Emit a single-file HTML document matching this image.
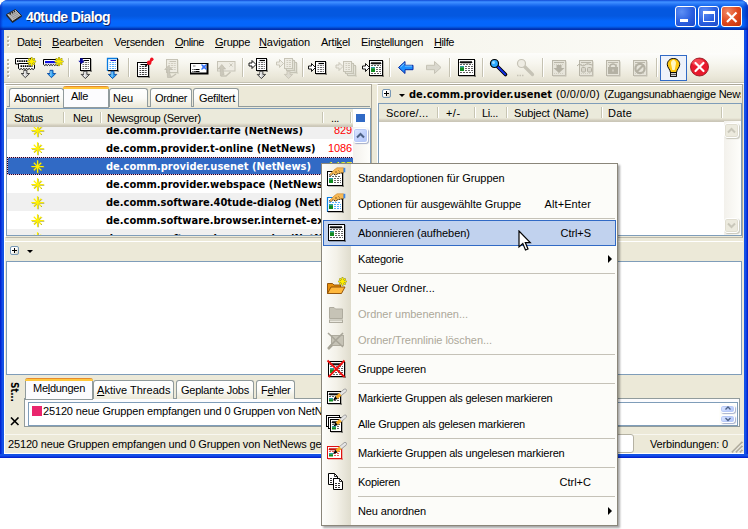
<!DOCTYPE html>
<html lang="de"><head><meta charset="utf-8"><title>40tude Dialog</title>
<style>
*{box-sizing:border-box;margin:0;padding:0}
html,body{width:748px;height:529px;overflow:hidden;background:#fff}
body{position:relative;font-family:"Liberation Sans",sans-serif;font-size:11px;color:#000;line-height:1}
.a{position:absolute}
.t{position:absolute;white-space:nowrap;line-height:13px;height:13px}
.tb{position:absolute;white-space:nowrap;line-height:13px;height:13px;font-family:"DejaVu Sans Condensed","Liberation Sans",sans-serif;font-weight:bold}
u{text-decoration:underline;text-underline-offset:1px}
/* window */
#win{left:0;top:0;width:748px;height:458px;background:linear-gradient(to right,#0019c8 0,#0a3ce0 1.500px,#1a58ea 3px,#0a4ce0 4px,#0a4ce0 744px,#1a58ea 745px,#0a3ce0 746.500px,#0019c8 748px);border-radius:8px 8px 0 0;overflow:hidden}
#title{left:0;top:0;width:748px;height:30px;background:linear-gradient(to right,rgba(0,20,170,.55) 0,rgba(0,20,170,0) 3px,rgba(0,20,170,0) 743px,rgba(0,20,170,.6) 748px),linear-gradient(to bottom,#0a3ccc 0,#2d7af5 1px,#3c8cff 2.500px,#1f70f2 5px,#0a5ce6 7px,#0458e0 9px,#0458e0 16px,#0560ee 19px,#0466fc 21px,#0466fc 26px,#0452d8 27.500px,#0030b0 29px,#0030b0 30px)}
#ttext{left:26px;top:9px;font:bold 14px/16px "Liberation Sans",sans-serif;color:#fff;text-shadow:1px 1px 0 #0a246a;white-space:nowrap;height:16px}
.cb{position:absolute;top:6px;width:21px;height:21px;border:1px solid #fff;border-radius:3px;background:radial-gradient(circle at 30% 25%,#5d8ff5 0%,#2a5fe0 55%,#1c49c8 100%)}
#cbx{background:radial-gradient(circle at 30% 25%,#f08a68 0%,#e04a20 50%,#c23008 100%)}
#client{left:4px;top:30px;width:740px;height:424px;background:#ece9d8;border-left:1px solid #fff;border-bottom:1px solid #fff}
#menubar{left:4px;top:30px;width:740px;height:23px;background:linear-gradient(to right,#eeebdc 0%,#f5f4eb 50%,#fdfdfa 100%)}
#toolbar{left:4px;top:53px;width:740px;height:29px;background:linear-gradient(to bottom,#fdfdfb 0%,#f7f6ef 35%,#ebe8da 80%,#e2dfd0 100%)}
.sep{position:absolute;top:58px;width:1px;height:19px;background:#c5c2b2;box-shadow:1px 0 0 #fff}
.ic{position:absolute;overflow:visible}

.grip{position:absolute;width:3px}
.grip i{display:block;width:2px;height:2px;background:#b9b5a3;box-shadow:1px 1px 0 #fff;margin-bottom:2px}
.frame{position:absolute;border-top:1px solid #aca899;box-shadow:inset 0 1px 0 #fff}
.tab{position:absolute;top:88px;height:19px;border:1px solid #919b9c;border-bottom:none;border-radius:3px 3px 0 0;background:linear-gradient(to bottom,#fff 0%,#fbfbf8 50%,#ece9d8 100%)}
.tabsel{position:absolute;border:1px solid #919b9c;border-top:none;border-radius:3px 3px 0 0;background:#fcfcfe}
.tabsel:before{content:"";position:absolute;left:-1px;right:-1px;top:0;height:3px;border-radius:3px 3px 0 0;background:linear-gradient(to bottom,#e68b2c 0,#e68b2c 1px,#ffc73c 1px,#ffc73c 3px)}
.lb{position:absolute;border:1px solid #7f9db9;background:#fff;overflow:hidden}
.hdr{position:absolute;left:0;top:0;height:17px;background:linear-gradient(to bottom,#ebeadb 0,#ebeadb 13px,#e2dece 14px,#d6d2c2 15px,#cbc7b8 16px)}
.hs{position:absolute;top:3px;width:1px;height:11px;background:#c7c5b2;box-shadow:1px 0 0 #fff}
.row{position:absolute;left:0;height:18px;width:346px}
.sbtn{position:absolute;border:1px solid #fff;border-radius:3px;background:linear-gradient(135deg,#e1eafe 0%,#c3d3fd 50%,#b1c5f8 100%);box-shadow:0 0 0 1px #b7c8f6 inset,1px 1px 1px rgba(80,100,160,.5)}
.sbtnd{position:absolute;border:1px solid #fff;border-radius:3px;background:#eceade;box-shadow:0 0 0 1px #e0ddd0 inset,1px 1px 1px rgba(150,150,130,.5)}
.plus{position:absolute;width:9px;height:9px;border:1px solid #7898b5;border-radius:2px;background:linear-gradient(135deg,#fff 0%,#fff 40%,#d6d2c2 100%)}
.plus:before{content:"";position:absolute;left:1px;top:3px;width:5px;height:1px;background:#000}
.plus:after{content:"";position:absolute;left:3px;top:1px;width:1px;height:5px;background:#000}
.dd{position:absolute;width:0;height:0;border-left:3px solid transparent;border-right:3px solid transparent;border-top:3px solid #000}
.red{color:#f00}
.b{font-family:"DejaVu Sans Condensed","Liberation Sans",sans-serif;font-weight:bold}

.tab2{position:absolute;top:380px;height:19px;border:1px solid #919b9c;border-bottom:none;border-radius:3px 3px 0 0;background:linear-gradient(to bottom,#fff 0%,#fbfbf8 50%,#ece9d8 100%)}

#cm{position:absolute;left:321px;top:163px;width:297px;height:363px;border:1px solid #8a867a;background:#fcfcf9;box-shadow:2px 2px 2px rgba(0,0,0,.35)}
#cm .gut{position:absolute;left:0;top:0;width:29px;height:361px;background:linear-gradient(to right,#fdfdfb 0%,#f3f1e8 50%,#dfdccd 100%)}
#cm .mi{margin-top:1px;position:absolute;left:36px;white-space:nowrap;line-height:13px;height:13px}
#cm .sc{margin-top:1px;position:absolute;right:26px;white-space:nowrap;line-height:13px;height:13px}
#cm .ms{position:absolute;left:36px;right:2px;height:1px;background:#c5c2b8}
#cm .dis{color:#aca899}
#cm .sub{position:absolute;left:286px;width:0;height:0;border-top:4px solid transparent;border-bottom:4px solid transparent;border-left:4px solid #000}
</style></head><body>
<div id="win" class="a">
<div id="title" class="a"></div>
<div id="ttext" class="a"><span style="letter-spacing:-0.600px">40tude Dialog</span></div>
<div class="cb" style="left:675px"><i style="position:absolute;left:4px;top:12px;width:8px;height:3px;background:#fff"></i></div>
<div class="cb" style="left:698px"><i style="position:absolute;left:4px;top:4px;width:12px;height:11px;border:1px solid #fff;border-top-width:3px"></i></div>
<div class="cb" id="cbx" style="left:721px"><svg style="position:absolute;left:0;top:0" width="19" height="19"><path d="M5,5.500 L14.500,15 M14.500,5.500 L5,15" stroke="#fff" stroke-width="2.200"/></svg></div>
<svg class="a" style="left:4px;top:7px" width="22" height="18" viewBox="4 7 22 18"><path d="M6,15.500 L15.500,10 L22,16.500 L12.500,23 Z" fill="#222"/><path d="M6.500,14.500 L15.500,9.500 L21.500,15.500 L12.500,21.500 Z" fill="#b8b8b8" stroke="#1a1a1a" stroke-width="0.900"/><path d="M9.500,14.200 L15,11.200" stroke="#222" stroke-width="1.600" stroke-dasharray="1.600 1"/><path d="M10.500,16 L17,12.500 M11.800,17.300 L18.300,13.800 M13,18.700 L19.500,15.200" stroke="#8a8a8a" stroke-width="0.800"/></svg>
<div class="a" style="left:0;top:454px;width:748px;height:4px;background:linear-gradient(to bottom,#0a4ce0 0,#1a58ea 1px,#0a3ce0 2.500px,#0019c8 4px)"></div>
<div id="client" class="a"></div>
<div id="menubar" class="a"></div>
<div id="toolbar" class="a"></div>
<div class="a" style="left:4px;top:82px;width:740px;height:1px;background:#c5c2b2"></div>
<div class="a" style="left:4px;top:83px;width:740px;height:1px;background:#fff"></div>
<div class="grip" style="left:7px;top:36px"><i></i><i></i><i></i></div>
<div class="grip" style="left:7px;top:59px"><i></i><i></i><i></i><i></i><i></i></div>
<!-- menu -->
<div class="t" style="left:17px;top:36px"><span style="letter-spacing:-0.341px">Date<u>i</u></span></div>
<div class="t" style="left:52px;top:36px"><span style="letter-spacing:-0.222px"><u>B</u>earbeiten</span></div>
<div class="t" style="left:114px;top:36px"><span style="letter-spacing:-0.292px">Ve<u>r</u>senden</span></div>
<div class="t" style="left:175px;top:36px"><span style="letter-spacing:-0.469px"><u>O</u>nline</span></div>
<div class="t" style="left:215px;top:36px"><span style="letter-spacing:-0.284px"><u>G</u>ruppe</span></div>
<div class="t" style="left:259px;top:36px"><span style="letter-spacing:-0.100px"><u>N</u>avigation</span></div>
<div class="t" style="left:321px;top:36px"><span style="letter-spacing:-0.223px">Arti<u>k</u>el</span></div>
<div class="t" style="left:361px;top:36px"><span style="letter-spacing:-0.312px">Ein<u>s</u>tellungen</span></div>
<div class="t" style="left:434px;top:36px"><span style="letter-spacing:-0.403px"><u>H</u>ilfe</span></div>
<!-- toolbar separators -->
<div class="sep" style="left:68px"></div><div class="sep" style="left:128px"></div><div class="sep" style="left:242px"></div><div class="sep" style="left:302px"></div><div class="sep" style="left:389px"></div><div class="sep" style="left:449px"></div><div class="sep" style="left:482px"></div><div class="sep" style="left:542px"></div><div class="sep" style="left:656px"></div>
<svg class="a" style="left:0;top:0" width="748" height="90" viewBox="0 0 748 90"><path d="M15.5,58.5 h16 v5.5 h-16 z" fill="#fff" stroke="#000"/><line x1="17" y1="61.2" x2="28" y2="61.2" stroke="#000" stroke-width="1.7" stroke-dasharray="1.5 0.7"/><path d="M18.5,63.5 h16 v5 l-1.333,1 l-1.333,-1 l-1.333,1 l-1.333,-1 l-1.333,1 l-1.333,-1 l-1.333,1 l-1.333,-1 l-1.333,1 l-1.333,-1 l-1.333,1 l-1.333,-1 z" fill="#fff" stroke="#000"/><line x1="20.5" y1="66.2" x2="32.5" y2="66.2" stroke="#000" stroke-width="1.7" stroke-dasharray="1.5 0.7"/><line x1="28.00" y1="61.60" x2="35.20" y2="61.60" stroke="#8a8a10" stroke-width="2.0" stroke-linecap="round"/><line x1="29.05" y1="59.05" x2="34.15" y2="64.15" stroke="#8a8a10" stroke-width="2.0" stroke-linecap="round"/><line x1="31.60" y1="58.00" x2="31.60" y2="65.20" stroke="#8a8a10" stroke-width="2.0" stroke-linecap="round"/><line x1="34.15" y1="59.05" x2="29.05" y2="64.15" stroke="#8a8a10" stroke-width="2.0" stroke-linecap="round"/><line x1="28.00" y1="61.60" x2="35.20" y2="61.60" stroke="#ffee00" stroke-width="1.2" stroke-linecap="round"/><line x1="29.05" y1="59.05" x2="34.15" y2="64.15" stroke="#ffee00" stroke-width="1.2" stroke-linecap="round"/><line x1="31.60" y1="58.00" x2="31.60" y2="65.20" stroke="#ffee00" stroke-width="1.2" stroke-linecap="round"/><line x1="34.15" y1="59.05" x2="29.05" y2="64.15" stroke="#ffee00" stroke-width="1.2" stroke-linecap="round"/><path d="M23.9,70.3 h3 v3.2 h2.7 l-4.2,4.2 l-4.2,-4.2 h2.7 z" fill="#cfcfcf" stroke="#333" stroke-width="0.9" stroke-linejoin="round"/><path d="M24.799999999999997,71.1 v5" stroke="#fff" stroke-width="1"/><path d="M43.5,59.5 h15 v5 l-1.250,1 l-1.250,-1 l-1.250,1 l-1.250,-1 l-1.250,1 l-1.250,-1 l-1.250,1 l-1.250,-1 l-1.250,1 l-1.250,-1 l-1.250,1 l-1.250,-1 z" fill="#fff" stroke="#000"/><rect x="45" y="61" width="11.5" height="2.2" fill="#1010e0"/><line x1="55.40" y1="61.60" x2="62.60" y2="61.60" stroke="#8a8a10" stroke-width="2.0" stroke-linecap="round"/><line x1="56.45" y1="59.05" x2="61.55" y2="64.15" stroke="#8a8a10" stroke-width="2.0" stroke-linecap="round"/><line x1="59.00" y1="58.00" x2="59.00" y2="65.20" stroke="#8a8a10" stroke-width="2.0" stroke-linecap="round"/><line x1="61.55" y1="59.05" x2="56.45" y2="64.15" stroke="#8a8a10" stroke-width="2.0" stroke-linecap="round"/><line x1="55.40" y1="61.60" x2="62.60" y2="61.60" stroke="#ffee00" stroke-width="1.2" stroke-linecap="round"/><line x1="56.45" y1="59.05" x2="61.55" y2="64.15" stroke="#ffee00" stroke-width="1.2" stroke-linecap="round"/><line x1="59.00" y1="58.00" x2="59.00" y2="65.20" stroke="#ffee00" stroke-width="1.2" stroke-linecap="round"/><line x1="61.55" y1="59.05" x2="56.45" y2="64.15" stroke="#ffee00" stroke-width="1.2" stroke-linecap="round"/><path d="M50.0,70.3 h3 v3.2 h2.7 l-4.2,4.2 l-4.2,-4.2 h2.7 z" fill="#2a9cf0" stroke="#0a4aa0" stroke-width="0.9" stroke-linejoin="round"/><path d="M50.9,71.1 v5" stroke="#9adcff" stroke-width="1"/><g opacity="1"><rect x="80.5" y="58.5" width="10" height="12" fill="#fff" stroke="#000" stroke-width="1"/><path d="M91,59 v13 M81,71 h11" stroke="#000" stroke-width="1" opacity="0.5" fill="none"/><line x1="83.5" y1="60.5" x2="89" y2="60.5" stroke="#000" stroke-width="1.2"/><line x1="82.5" y1="62.50" x2="89" y2="62.50" stroke="#555" stroke-width="1" stroke-dasharray="1.6 0.8 2.4 0.8" opacity="0.85"/><line x1="82.5" y1="64.50" x2="89" y2="64.50" stroke="#555" stroke-width="1" stroke-dasharray="1.6 0.8 2.4 0.8" opacity="0.85"/><line x1="82.5" y1="66.50" x2="89" y2="66.50" stroke="#555" stroke-width="1" stroke-dasharray="1.6 0.8 2.4 0.8" opacity="0.85"/><line x1="82.5" y1="68.50" x2="89" y2="68.50" stroke="#555" stroke-width="1" stroke-dasharray="1.6 0.8 2.4 0.8" opacity="0.85"/></g><path d="M80.2,58.3 h2.6 v2.4 h1.9 l-3.2,3.4 l-3.2,-3.400 h1.9 z" fill="#0a0aa0"/><path d="M83.9,71.2 h3 v3.2 h2.7 l-4.2,4.2 l-4.2,-4.2 h2.7 z" fill="#cfcfcf" stroke="#333" stroke-width="0.9" stroke-linejoin="round"/><path d="M84.80000000000001,72.0 v5" stroke="#fff" stroke-width="1"/><g opacity="1"><rect x="107.5" y="58.5" width="10" height="12" fill="#fff" stroke="#000" stroke-width="1"/><path d="M118,59 v13 M108,71 h11" stroke="#000" stroke-width="1" opacity="0.5" fill="none"/><line x1="110.5" y1="60.5" x2="116" y2="60.5" stroke="#1010c0" stroke-width="1.2"/><line x1="109.5" y1="62.50" x2="116" y2="62.50" stroke="#3aa0ff" stroke-width="1" stroke-dasharray="1.6 0.8 2.4 0.8" opacity="0.85"/><line x1="109.5" y1="64.50" x2="116" y2="64.50" stroke="#3aa0ff" stroke-width="1" stroke-dasharray="1.6 0.8 2.4 0.8" opacity="0.85"/><line x1="109.5" y1="66.50" x2="116" y2="66.50" stroke="#3aa0ff" stroke-width="1" stroke-dasharray="1.6 0.8 2.4 0.8" opacity="0.85"/><line x1="109.5" y1="68.50" x2="116" y2="68.50" stroke="#3aa0ff" stroke-width="1" stroke-dasharray="1.6 0.8 2.4 0.8" opacity="0.85"/></g><path d="M107.5,71 v-12.5 h10" fill="none" stroke="#0a7ce0" stroke-width="1.3"/><path d="M111.1,71.2 h3 v3.2 h2.7 l-4.2,4.2 l-4.2,-4.2 h2.7 z" fill="#2a9cf0" stroke="#0a4aa0" stroke-width="0.9" stroke-linejoin="round"/><path d="M112.0,72.0 v5" stroke="#9adcff" stroke-width="1"/><g opacity="1"><rect x="137.5" y="62.5" width="11" height="14" fill="#fff" stroke="#000" stroke-width="1"/><path d="M149,63 v15 M138,77 h12" stroke="#000" stroke-width="1" opacity="0.5" fill="none"/><line x1="140.5" y1="64.5" x2="147" y2="64.5" stroke="#000" stroke-width="1.2"/><line x1="139.5" y1="66.50" x2="147" y2="66.50" stroke="#222" stroke-width="1" stroke-dasharray="1.6 0.8 2.4 0.8" opacity="0.85"/><line x1="139.5" y1="68.50" x2="147" y2="68.50" stroke="#222" stroke-width="1" stroke-dasharray="1.6 0.8 2.4 0.8" opacity="0.85"/><line x1="139.5" y1="70.50" x2="147" y2="70.50" stroke="#222" stroke-width="1" stroke-dasharray="1.6 0.8 2.4 0.8" opacity="0.85"/><line x1="139.5" y1="72.50" x2="147" y2="72.50" stroke="#222" stroke-width="1" stroke-dasharray="1.6 0.8 2.4 0.8" opacity="0.85"/><line x1="139.5" y1="74.50" x2="147" y2="74.50" stroke="#222" stroke-width="1" stroke-dasharray="1.6 0.8 2.4 0.8" opacity="0.85"/></g><line x1="145" y1="66.5" x2="149" y2="63" stroke="#000" stroke-width="1.2"/><circle cx="149.2" cy="62.8" r="2.3" fill="#f01020"/><circle cx="151.8" cy="59.3" r="1.700" fill="#f01020"/><line x1="149.500" y1="62.500" x2="152" y2="59.500" stroke="#f01020" stroke-width="2"/><g opacity="1"><rect x="166.5" y="59.5" width="11" height="13" fill="#eeece3" stroke="#c6c3b6" stroke-width="1"/><path d="M178,60 v14 M167,73 h12" stroke="#c6c3b6" stroke-width="1" opacity="0.5" fill="none"/><line x1="169.5" y1="61.5" x2="176" y2="61.5" stroke="#c6c3b6" stroke-width="1.2"/><line x1="168.5" y1="63.50" x2="176" y2="63.50" stroke="#cbc8bb" stroke-width="1" stroke-dasharray="1.6 0.8 2.4 0.8" opacity="0.85"/><line x1="168.5" y1="65.50" x2="176" y2="65.50" stroke="#cbc8bb" stroke-width="1" stroke-dasharray="1.6 0.8 2.4 0.8" opacity="0.85"/><line x1="168.5" y1="67.50" x2="176" y2="67.50" stroke="#cbc8bb" stroke-width="1" stroke-dasharray="1.6 0.8 2.4 0.8" opacity="0.85"/><line x1="168.5" y1="69.50" x2="176" y2="69.50" stroke="#cbc8bb" stroke-width="1" stroke-dasharray="1.6 0.8 2.4 0.8" opacity="0.85"/></g><path d="M167.500,77.500 q-0.500,-5 0,-8 h-2.800 l3.800,-3.800 l3.800,3.800 h-2.800 q-0.500,4 2,8 z" fill="#cbc8bb" stroke="#bab7aa" stroke-width="0.600"/><path d="M171,77.500 l5,-3.500" stroke="#c6c3b6" stroke-width="1.500"/><rect x="190" y="63" width="18.500" height="11.500" fill="#000"/><rect x="191" y="64" width="15.500" height="8.500" fill="#fff"/><line x1="193" y1="66" x2="195.5" y2="66" stroke="#777"/><line x1="192.500" y1="69.500" x2="199.500" y2="69.500" stroke="#000" stroke-width="1.100" stroke-dasharray="0.800 0.600 0.800 0.600 4 0"/><line x1="192.500" y1="71.500" x2="199.500" y2="71.500" stroke="#000" stroke-width="1.100" stroke-dasharray="0.800 0.600 0.800 0.600 4 0"/><rect x="202.300" y="65.300" width="3.400" height="3.400" fill="#8a5af0" opacity="0.800"/><path d="M201.500,64.500 l5,5 M206.500,64.500 l-5,5" stroke="#2a7af8" stroke-width="1.300"/><rect x="217.500" y="61.500" width="17.500" height="9.500" fill="#eeece3" stroke="#c6c3b6"/><path d="M229.500,63.500 l3,3 M232.500,63.500 l-3,3" stroke="#cbc8bb"/><path d="M220.500,76 q-0.500,-4 0,-7 h-2.500 l3.800,-4.500 l3.800,4.500 h-2.500 q0,3 1,5.500 z" fill="#cbc8bb" stroke="#bab7aa" stroke-width="0.600"/><path d="M221,76 h5 l4.500,-4" fill="none" stroke="#c6c3b6" stroke-width="1.500"/><g opacity="1"><rect x="256.5" y="58.5" width="10" height="12" fill="#fff" stroke="#000" stroke-width="1"/><path d="M267,59 v13 M257,71 h11" stroke="#000" stroke-width="1" opacity="0.5" fill="none"/><line x1="259.5" y1="60.5" x2="265" y2="60.5" stroke="#000" stroke-width="1.2"/><line x1="258.5" y1="62.50" x2="265" y2="62.50" stroke="#555" stroke-width="1" stroke-dasharray="1.6 0.8 2.4 0.8" opacity="0.85"/><line x1="258.5" y1="64.50" x2="265" y2="64.50" stroke="#555" stroke-width="1" stroke-dasharray="1.6 0.8 2.4 0.8" opacity="0.85"/><line x1="258.5" y1="66.50" x2="265" y2="66.50" stroke="#555" stroke-width="1" stroke-dasharray="1.6 0.8 2.4 0.8" opacity="0.85"/><line x1="258.5" y1="68.50" x2="265" y2="68.50" stroke="#555" stroke-width="1" stroke-dasharray="1.6 0.8 2.4 0.8" opacity="0.85"/></g><path d="M249,63.0 h3 v-2.5 l4,4 l-4,4 v-2.5 h-3 z" fill="#fff" stroke="#000" stroke-width="0.9" stroke-linejoin="round"/><path d="M259.9,71.2 h3 v3.2 h2.7 l-4.2,4.2 l-4.2,-4.2 h2.7 z" fill="#cfcfcf" stroke="#333" stroke-width="0.9" stroke-linejoin="round"/><path d="M260.79999999999995,72.0 v5" stroke="#fff" stroke-width="1"/><g opacity="1"><rect x="288.5" y="62.5" width="8" height="10" fill="#eeece3" stroke="#c6c3b6" stroke-width="1"/><path d="M297,63 v11 M289,73 h9" stroke="#c6c3b6" stroke-width="1" opacity="0.5" fill="none"/><line x1="290.5" y1="64.50" x2="295" y2="64.50" stroke="#cbc8bb" stroke-width="1" stroke-dasharray="1.6 0.8 2.4 0.8" opacity="0.85"/><line x1="290.5" y1="66.50" x2="295" y2="66.50" stroke="#cbc8bb" stroke-width="1" stroke-dasharray="1.6 0.8 2.4 0.8" opacity="0.85"/><line x1="290.5" y1="68.50" x2="295" y2="68.50" stroke="#cbc8bb" stroke-width="1" stroke-dasharray="1.6 0.8 2.4 0.8" opacity="0.85"/><line x1="290.5" y1="70.50" x2="295" y2="70.50" stroke="#cbc8bb" stroke-width="1" stroke-dasharray="1.6 0.8 2.4 0.8" opacity="0.85"/></g><g opacity="1"><rect x="286.5" y="60.5" width="8" height="10" fill="#eeece3" stroke="#c6c3b6" stroke-width="1"/><path d="M295,61 v11 M287,71 h9" stroke="#c6c3b6" stroke-width="1" opacity="0.5" fill="none"/><line x1="288.5" y1="62.50" x2="293" y2="62.50" stroke="#cbc8bb" stroke-width="1" stroke-dasharray="1.6 0.8 2.4 0.8" opacity="0.85"/><line x1="288.5" y1="64.50" x2="293" y2="64.50" stroke="#cbc8bb" stroke-width="1" stroke-dasharray="1.6 0.8 2.4 0.8" opacity="0.85"/><line x1="288.5" y1="66.50" x2="293" y2="66.50" stroke="#cbc8bb" stroke-width="1" stroke-dasharray="1.6 0.8 2.4 0.8" opacity="0.85"/><line x1="288.5" y1="68.50" x2="293" y2="68.50" stroke="#cbc8bb" stroke-width="1" stroke-dasharray="1.6 0.8 2.4 0.8" opacity="0.85"/></g><g opacity="1"><rect x="284.5" y="58.5" width="8" height="10" fill="#eeece3" stroke="#c6c3b6" stroke-width="1"/><path d="M293,59 v11 M285,69 h9" stroke="#c6c3b6" stroke-width="1" opacity="0.5" fill="none"/><line x1="286.5" y1="60.50" x2="291" y2="60.50" stroke="#cbc8bb" stroke-width="1" stroke-dasharray="1.6 0.8 2.4 0.8" opacity="0.85"/><line x1="286.5" y1="62.50" x2="291" y2="62.50" stroke="#cbc8bb" stroke-width="1" stroke-dasharray="1.6 0.8 2.4 0.8" opacity="0.85"/><line x1="286.5" y1="64.50" x2="291" y2="64.50" stroke="#cbc8bb" stroke-width="1" stroke-dasharray="1.6 0.8 2.4 0.8" opacity="0.85"/><line x1="286.5" y1="66.50" x2="291" y2="66.50" stroke="#cbc8bb" stroke-width="1" stroke-dasharray="1.6 0.8 2.4 0.8" opacity="0.85"/></g><path d="M276.5,62.0 h3 v-2.5 l4,4 l-4,4 v-2.5 h-3 z" fill="#eeece3" stroke="#c6c3b6" stroke-width="0.9" stroke-linejoin="round"/><path d="M287.0,71.2 h3 v3.2 h2.7 l-4.2,4.2 l-4.2,-4.2 h2.7 z" fill="#dcd9ce" stroke="#c6c3b6" stroke-width="0.9" stroke-linejoin="round"/><g opacity="1"><rect x="315.5" y="61.5" width="10" height="12" fill="#fff" stroke="#000" stroke-width="1"/><path d="M326,62 v13 M316,74 h11" stroke="#000" stroke-width="1" opacity="0.5" fill="none"/><line x1="318.5" y1="63.5" x2="324" y2="63.5" stroke="#000" stroke-width="1.2"/><line x1="317.5" y1="65.50" x2="324" y2="65.50" stroke="#555" stroke-width="1" stroke-dasharray="1.6 0.8 2.4 0.8" opacity="0.85"/><line x1="317.5" y1="67.50" x2="324" y2="67.50" stroke="#555" stroke-width="1" stroke-dasharray="1.6 0.8 2.4 0.8" opacity="0.85"/><line x1="317.5" y1="69.50" x2="324" y2="69.50" stroke="#555" stroke-width="1" stroke-dasharray="1.6 0.8 2.4 0.8" opacity="0.85"/><line x1="317.5" y1="71.50" x2="324" y2="71.50" stroke="#555" stroke-width="1" stroke-dasharray="1.6 0.8 2.4 0.8" opacity="0.85"/></g><path d="M308.5,66.0 h3 v-2.5 l4,4 l-4,4 v-2.5 h-3 z" fill="#fff" stroke="#000" stroke-width="0.9" stroke-linejoin="round"/><g opacity="1"><rect x="347.5" y="65.5" width="8" height="10" fill="#eeece3" stroke="#c6c3b6" stroke-width="1"/><path d="M356,66 v11 M348,76 h9" stroke="#c6c3b6" stroke-width="1" opacity="0.5" fill="none"/><line x1="349.5" y1="67.50" x2="354" y2="67.50" stroke="#cbc8bb" stroke-width="1" stroke-dasharray="1.6 0.8 2.4 0.8" opacity="0.85"/><line x1="349.5" y1="69.50" x2="354" y2="69.50" stroke="#cbc8bb" stroke-width="1" stroke-dasharray="1.6 0.8 2.4 0.8" opacity="0.85"/><line x1="349.5" y1="71.50" x2="354" y2="71.50" stroke="#cbc8bb" stroke-width="1" stroke-dasharray="1.6 0.8 2.4 0.8" opacity="0.85"/><line x1="349.5" y1="73.50" x2="354" y2="73.50" stroke="#cbc8bb" stroke-width="1" stroke-dasharray="1.6 0.8 2.4 0.8" opacity="0.85"/></g><g opacity="1"><rect x="345.5" y="63.5" width="8" height="10" fill="#eeece3" stroke="#c6c3b6" stroke-width="1"/><path d="M354,64 v11 M346,74 h9" stroke="#c6c3b6" stroke-width="1" opacity="0.5" fill="none"/><line x1="347.5" y1="65.50" x2="352" y2="65.50" stroke="#cbc8bb" stroke-width="1" stroke-dasharray="1.6 0.8 2.4 0.8" opacity="0.85"/><line x1="347.5" y1="67.50" x2="352" y2="67.50" stroke="#cbc8bb" stroke-width="1" stroke-dasharray="1.6 0.8 2.4 0.8" opacity="0.85"/><line x1="347.5" y1="69.50" x2="352" y2="69.50" stroke="#cbc8bb" stroke-width="1" stroke-dasharray="1.6 0.8 2.4 0.8" opacity="0.85"/><line x1="347.5" y1="71.50" x2="352" y2="71.50" stroke="#cbc8bb" stroke-width="1" stroke-dasharray="1.6 0.8 2.4 0.8" opacity="0.85"/></g><g opacity="1"><rect x="343.5" y="61.5" width="8" height="10" fill="#eeece3" stroke="#c6c3b6" stroke-width="1"/><path d="M352,62 v11 M344,72 h9" stroke="#c6c3b6" stroke-width="1" opacity="0.5" fill="none"/><line x1="345.5" y1="63.50" x2="350" y2="63.50" stroke="#cbc8bb" stroke-width="1" stroke-dasharray="1.6 0.8 2.4 0.8" opacity="0.85"/><line x1="345.5" y1="65.50" x2="350" y2="65.50" stroke="#cbc8bb" stroke-width="1" stroke-dasharray="1.6 0.8 2.4 0.8" opacity="0.85"/><line x1="345.5" y1="67.50" x2="350" y2="67.50" stroke="#cbc8bb" stroke-width="1" stroke-dasharray="1.6 0.8 2.4 0.8" opacity="0.85"/><line x1="345.5" y1="69.50" x2="350" y2="69.50" stroke="#cbc8bb" stroke-width="1" stroke-dasharray="1.6 0.8 2.4 0.8" opacity="0.85"/></g><path d="M336,65.0 h3 v-2.5 l4,4 l-4,4 v-2.5 h-3 z" fill="#eeece3" stroke="#c6c3b6" stroke-width="0.9" stroke-linejoin="round"/><g opacity="1"><rect x="369.5" y="60.5" width="13" height="15" fill="#fff" stroke="#000"/><path d="M383,61 v16 M370,76 h14" stroke="#000" stroke-width="1" opacity="0.5" fill="none"/><path d="M371,64 l1,-1.5 l1,1.5 l1,-1.5 l1,1.5 l1,-1.5 l1,1.5 l1,-1.5 l1,1.5 l1,-1.5 l1,1.5" fill="none" stroke="#000" stroke-width="1.3" stroke-linejoin="round"/><line x1="371" y1="65.5" x2="381" y2="65.5" stroke="#4a4a4a" stroke-width="1" stroke-dasharray="2 1" opacity="0.85"/><line x1="376" y1="67.5" x2="381" y2="67.5" stroke="#4a4a4a" stroke-width="1" stroke-dasharray="2 1" opacity="0.85"/><line x1="376" y1="69.5" x2="381" y2="69.5" stroke="#4a4a4a" stroke-width="1" stroke-dasharray="2 1" opacity="0.85"/><line x1="376" y1="71.5" x2="381" y2="71.5" stroke="#4a4a4a" stroke-width="1" stroke-dasharray="2 1" opacity="0.85"/><line x1="371" y1="73.5" x2="381" y2="73.5" stroke="#4a4a4a" stroke-width="1" stroke-dasharray="2 1" opacity="0.85"/><rect x="371" y="67" width="4" height="1.5" fill="#2a9aa8"/><rect x="371" y="68.3" width="4" height="3.7" fill="#0f8a1f"/></g><path d="M362.5,66.0 h3 v-2.5 l4,4 l-4,4 v-2.5 h-3 z" fill="#fff" stroke="#000" stroke-width="0.9" stroke-linejoin="round"/><path d="M398.500,67.500 l6.500,-6 v3.800 h8 v4.400 h-8 v3.800 z" fill="#1e90ff" stroke="#0a2aa0" stroke-width="1" stroke-linejoin="round"/><path d="M400.500,67.200 l4,-3.700 M405,66 h7" stroke="#8ad0ff" stroke-width="0.900" fill="none"/><path d="M441,67.500 l-6.500,-6 v3.800 h-8 v4.400 h8 v3.800 z" fill="#dad8ce" stroke="#c6c3b6" stroke-width="1" stroke-linejoin="round"/><g opacity="1"><rect x="458.5" y="59.5" width="16" height="16" fill="#fff" stroke="#000"/><path d="M475,60 v17 M459,76 h17" stroke="#000" stroke-width="1" opacity="0.5" fill="none"/><path d="M460,63 l1,-1.5 l1,1.5 l1,-1.5 l1,1.5 l1,-1.5 l1,1.5 l1,-1.5 l1,1.5 l1,-1.5 l1,1.5 l1,-1.5 l1,1.5" fill="none" stroke="#000" stroke-width="1.3" stroke-linejoin="round"/><line x1="460" y1="64.5" x2="473" y2="64.5" stroke="#4a4a4a" stroke-width="1" stroke-dasharray="2 1" opacity="0.85"/><line x1="465" y1="66.5" x2="473" y2="66.5" stroke="#4a4a4a" stroke-width="1" stroke-dasharray="2 1" opacity="0.85"/><line x1="465" y1="68.5" x2="473" y2="68.5" stroke="#4a4a4a" stroke-width="1" stroke-dasharray="2 1" opacity="0.85"/><line x1="465" y1="70.5" x2="473" y2="70.5" stroke="#4a4a4a" stroke-width="1" stroke-dasharray="2 1" opacity="0.85"/><line x1="460" y1="72.5" x2="473" y2="72.5" stroke="#4a4a4a" stroke-width="1" stroke-dasharray="2 1" opacity="0.85"/><rect x="460" y="66" width="4" height="1.5" fill="#2a9aa8"/><rect x="460" y="67.3" width="4" height="3.7" fill="#0f8a1f"/></g><line x1="497" y1="66" x2="505.500" y2="74.500" stroke="#000" stroke-width="3.600" stroke-linecap="round"/><line x1="497" y1="66" x2="505.300" y2="74.300" stroke="#1030f0" stroke-width="1.800" stroke-linecap="round"/><circle cx="494.500" cy="63.500" r="4" fill="#28a8ff" stroke="#000" stroke-width="1.200"/><circle cx="493.500" cy="62.500" r="1.500" fill="#9adcff"/><line x1="524" y1="66" x2="532.500" y2="74.500" stroke="#c6c3b6" stroke-width="3.200" stroke-linecap="round"/><circle cx="521.500" cy="63.500" r="4" fill="#eeece3" stroke="#c6c3b6" stroke-width="1.200"/><line x1="517" y1="75.500" x2="524" y2="75.500" stroke="#c6c3b6" stroke-width="1.400" stroke-dasharray="1.500 1"/><rect x="552.5" y="60.500" width="13" height="15" fill="#e6e4da" stroke="#b9b6a9"/><path d="M566,61.500 v15 M553,76 h13" stroke="#c6c3b6" fill="none"/><line x1="554" y1="62.500" x2="564" y2="62.500" stroke="#bab7aa"/><line x1="554" y1="64.500" x2="564" y2="64.500" stroke="#d0cdc0" stroke-dasharray="1 1"/><line x1="554" y1="73.500" x2="564" y2="73.500" stroke="#d0cdc0" stroke-dasharray="1 1"/><rect x="579.5" y="60.500" width="13" height="15" fill="#e6e4da" stroke="#b9b6a9"/><path d="M593,61.500 v15 M580,76 h13" stroke="#c6c3b6" fill="none"/><line x1="581" y1="62.500" x2="591" y2="62.500" stroke="#bab7aa"/><line x1="581" y1="64.500" x2="591" y2="64.500" stroke="#d0cdc0" stroke-dasharray="1 1"/><line x1="581" y1="73.500" x2="591" y2="73.500" stroke="#d0cdc0" stroke-dasharray="1 1"/><rect x="606.5" y="60.500" width="13" height="15" fill="#e6e4da" stroke="#b9b6a9"/><path d="M620,61.500 v15 M607,76 h13" stroke="#c6c3b6" fill="none"/><line x1="608" y1="62.500" x2="618" y2="62.500" stroke="#bab7aa"/><line x1="608" y1="64.500" x2="618" y2="64.500" stroke="#d0cdc0" stroke-dasharray="1 1"/><line x1="608" y1="73.500" x2="618" y2="73.500" stroke="#d0cdc0" stroke-dasharray="1 1"/><rect x="633.5" y="60.500" width="13" height="15" fill="#e6e4da" stroke="#b9b6a9"/><path d="M647,61.500 v15 M634,76 h13" stroke="#c6c3b6" fill="none"/><line x1="635" y1="62.500" x2="645" y2="62.500" stroke="#bab7aa"/><line x1="635" y1="64.500" x2="645" y2="64.500" stroke="#d0cdc0" stroke-dasharray="1 1"/><line x1="635" y1="73.500" x2="645" y2="73.500" stroke="#d0cdc0" stroke-dasharray="1 1"/><path d="M556.500,65 h5 v3 h3 l-5.500,5 l-5.500,-5 h3 z" fill="#b4b1a4"/><path d="M577,66 q2,-3 4,-1 t4,0 t4,-1 t4,1" fill="none" stroke="#b4b1a4"/><rect x="581.500" y="67.500" width="4" height="4.500" rx="1" fill="#d8d5ca" stroke="#b4b1a4"/><rect x="587.500" y="67.500" width="4" height="4.500" rx="1" fill="#d8d5ca" stroke="#b4b1a4"/><rect x="608" y="67" width="10" height="7" fill="#b4b1a4"/><path d="M610,67 v-1.500 q3,-3 6,0 v1.500" fill="none" stroke="#b4b1a4" stroke-width="1.600"/><rect x="612.500" y="69.500" width="1" height="2" fill="#e6e4da"/><circle cx="640" cy="68.500" r="4.600" fill="none" stroke="#b4b1a4" stroke-width="2.200"/><line x1="636.500" y1="72" x2="643.500" y2="65" stroke="#b4b1a4" stroke-width="2.200"/><rect x="660.500" y="55.500" width="26" height="25" fill="#eef2fa" stroke="#316ac5"/><path d="M673.500,58.500 c-4,0 -6.200,3 -6.200,6 c0,3.200 2.800,4.600 3.200,8 h6 c0.400,-3.400 3.200,-4.800 3.200,-8 c0,-3 -2.200,-6 -6.200,-6 z" fill="#ffc810" stroke="#000" stroke-width="1"/><path d="M673.500,60 c-2,0 -3,2.500 -2.200,5 l1,5 h2.400 l1,-5 c0.800,-2.500 -0.200,-5 -2.200,-5z" fill="#fff7c0"/><rect x="670.500" y="72.500" width="6" height="4" fill="#d0d0d0" stroke="#000" stroke-width="0.900"/><line x1="671" y1="74.500" x2="676" y2="74.500" stroke="#555"/><circle cx="699.500" cy="67" r="9" fill="#e8192c" stroke="#8a0a14" stroke-width="0.800"/><ellipse cx="698" cy="62.500" rx="6" ry="3.500" fill="#ff6a70" opacity="0.550"/><path d="M695.500,63 l8,8 M703.500,63 l-8,8" stroke="#fff" stroke-width="2.200" stroke-linecap="round"/></svg>
<!-- left panel -->
<div class="frame" style="left:5px;top:84px;width:367px;height:154px;border-bottom:1px solid #bcb9aa;border-right:1px solid #aca899;border-left:1px solid #fff"></div>
<div class="a" style="left:7px;top:106px;width:363px;height:1px;background:#919b9c"></div>
<div class="tab" style="left:9px;width:55px"></div>
<div class="tab" style="left:109px;width:39px"></div>
<div class="tab" style="left:150px;width:42px"></div>
<div class="tab" style="left:193px;width:46px"></div>
<div class="tabsel" style="left:63px;top:86px;width:46px;height:22px"></div>
<div class="t" style="left:14px;top:92px"><span style="letter-spacing:-0.233px">Abonniert</span></div>
<div class="t" style="left:71px;top:90px"><span style="letter-spacing:-0.336px">Alle</span></div>
<div class="t" style="left:113px;top:92px"><span style="letter-spacing:-0.062px">Neu</span></div>
<div class="t" style="left:155px;top:92px"><span style="letter-spacing:-0.375px">Ordner</span></div>
<div class="t" style="left:199px;top:92px"><span style="letter-spacing:-0.280px">Gefiltert</span></div>
<div class="lb" style="left:6px;top:108px;width:365px;height:128px">
 <div class="hdr" style="width:363px;height:18px;background:linear-gradient(to bottom,#ebeadb 0,#ebeadb 14px,#e2dece 15px,#d6d2c2 16px,#cbc7b8 17px)"></div>
 <div class="a" style="left:346px;top:0;width:17px;height:18px;background:#fff"></div>
 <div class="a" style="left:349px;top:5px;width:9px;height:8px;background:#316ac5"></div>
 <div class="hs" style="left:56px"></div><div class="hs" style="left:93px"></div><div class="hs" style="left:315px"></div><div class="hs" style="left:343px"></div>
 <div class="t" style="left:7px;top:3px"><span style="letter-spacing:-0.365px">Status</span></div>
 <div class="t" style="left:66px;top:3px"><span style="letter-spacing:-0.229px">Neu</span></div>
 <div class="t" style="left:100px;top:3px"><span style="letter-spacing:-0.246px">Newsgroup (Server)</span></div>
 <div class="t" style="left:324px;top:3px"><span style="letter-spacing:-0.391px">...</span></div>
 <div class="a" style="left:0;top:18px;width:363px;height:108px;overflow:hidden"><div class="a" style="left:0;top:-1px;width:363px;height:109px">
  <div class="row" style="top:-5px;background:#f0f0f0"></div>
  <div class="row" style="top:13px;background:#fff"></div>
  <div class="row" style="top:31px;background:#316ac5"><i class="a" style="left:0;top:0;width:346px;height:1px;background:repeating-linear-gradient(to right,#14082a 0,#14082a 1px,#f4b4cc 1px,#f4b4cc 2px)"></i><i class="a" style="left:0;top:17px;width:346px;height:1px;background:repeating-linear-gradient(to right,#14082a 0,#14082a 1px,#f4b4cc 1px,#f4b4cc 2px)"></i><i class="a" style="left:0;top:0;width:1px;height:18px;background:repeating-linear-gradient(to bottom,#14082a 0,#14082a 1px,#f4b4cc 1px,#f4b4cc 2px)"></i></div>
  <div class="row" style="top:49px;background:#fff"></div>
  <div class="row" style="top:67px;background:#f0f0f0"></div>
  <div class="row" style="top:85px;background:#fff"></div>
  <div class="row" style="top:103px;background:#f0f0f0"></div>
<svg class="a" style="left:0;top:0" width="60" height="109" viewBox="0 0 60 109"><line x1="24.90" y1="5.10" x2="37.30" y2="5.10" stroke="#9a9a20" stroke-width="1.0"/><line x1="27.37" y1="1.37" x2="34.83" y2="8.83" stroke="#9a9a20" stroke-width="1.0"/><line x1="31.10" y1="-1.10" x2="31.10" y2="11.30" stroke="#9a9a20" stroke-width="1.0"/><line x1="34.83" y1="1.37" x2="27.37" y2="8.83" stroke="#9a9a20" stroke-width="1.0"/><line x1="24.30" y1="4.50" x2="36.70" y2="4.50" stroke="#fff000" stroke-width="1.15"/><line x1="26.77" y1="0.77" x2="34.23" y2="8.23" stroke="#fff000" stroke-width="1.15"/><line x1="30.50" y1="-1.70" x2="30.50" y2="10.70" stroke="#fff000" stroke-width="1.15"/><line x1="34.23" y1="0.77" x2="26.77" y2="8.23" stroke="#fff000" stroke-width="1.15"/><line x1="24.90" y1="23.10" x2="37.30" y2="23.10" stroke="#9a9a20" stroke-width="1.0"/><line x1="27.37" y1="19.37" x2="34.83" y2="26.83" stroke="#9a9a20" stroke-width="1.0"/><line x1="31.10" y1="16.90" x2="31.10" y2="29.30" stroke="#9a9a20" stroke-width="1.0"/><line x1="34.83" y1="19.37" x2="27.37" y2="26.83" stroke="#9a9a20" stroke-width="1.0"/><line x1="24.30" y1="22.50" x2="36.70" y2="22.50" stroke="#fff000" stroke-width="1.15"/><line x1="26.77" y1="18.77" x2="34.23" y2="26.23" stroke="#fff000" stroke-width="1.15"/><line x1="30.50" y1="16.30" x2="30.50" y2="28.70" stroke="#fff000" stroke-width="1.15"/><line x1="34.23" y1="18.77" x2="26.77" y2="26.23" stroke="#fff000" stroke-width="1.15"/><line x1="24.90" y1="41.10" x2="37.30" y2="41.10" stroke="#9a9a20" stroke-width="1.0"/><line x1="27.37" y1="37.37" x2="34.83" y2="44.83" stroke="#9a9a20" stroke-width="1.0"/><line x1="31.10" y1="34.90" x2="31.10" y2="47.30" stroke="#9a9a20" stroke-width="1.0"/><line x1="34.83" y1="37.37" x2="27.37" y2="44.83" stroke="#9a9a20" stroke-width="1.0"/><line x1="24.30" y1="40.50" x2="36.70" y2="40.50" stroke="#fff000" stroke-width="1.15"/><line x1="26.77" y1="36.77" x2="34.23" y2="44.23" stroke="#fff000" stroke-width="1.15"/><line x1="30.50" y1="34.30" x2="30.50" y2="46.70" stroke="#fff000" stroke-width="1.15"/><line x1="34.23" y1="36.77" x2="26.77" y2="44.23" stroke="#fff000" stroke-width="1.15"/><line x1="24.90" y1="59.10" x2="37.30" y2="59.10" stroke="#9a9a20" stroke-width="1.0"/><line x1="27.37" y1="55.37" x2="34.83" y2="62.83" stroke="#9a9a20" stroke-width="1.0"/><line x1="31.10" y1="52.90" x2="31.10" y2="65.30" stroke="#9a9a20" stroke-width="1.0"/><line x1="34.83" y1="55.37" x2="27.37" y2="62.83" stroke="#9a9a20" stroke-width="1.0"/><line x1="24.30" y1="58.50" x2="36.70" y2="58.50" stroke="#fff000" stroke-width="1.15"/><line x1="26.77" y1="54.77" x2="34.23" y2="62.23" stroke="#fff000" stroke-width="1.15"/><line x1="30.50" y1="52.30" x2="30.50" y2="64.70" stroke="#fff000" stroke-width="1.15"/><line x1="34.23" y1="54.77" x2="26.77" y2="62.23" stroke="#fff000" stroke-width="1.15"/><line x1="24.90" y1="77.10" x2="37.30" y2="77.10" stroke="#9a9a20" stroke-width="1.0"/><line x1="27.37" y1="73.37" x2="34.83" y2="80.83" stroke="#9a9a20" stroke-width="1.0"/><line x1="31.10" y1="70.90" x2="31.10" y2="83.30" stroke="#9a9a20" stroke-width="1.0"/><line x1="34.83" y1="73.37" x2="27.37" y2="80.83" stroke="#9a9a20" stroke-width="1.0"/><line x1="24.30" y1="76.50" x2="36.70" y2="76.50" stroke="#fff000" stroke-width="1.15"/><line x1="26.77" y1="72.77" x2="34.23" y2="80.23" stroke="#fff000" stroke-width="1.15"/><line x1="30.50" y1="70.30" x2="30.50" y2="82.70" stroke="#fff000" stroke-width="1.15"/><line x1="34.23" y1="72.77" x2="26.77" y2="80.23" stroke="#fff000" stroke-width="1.15"/><line x1="24.90" y1="95.10" x2="37.30" y2="95.10" stroke="#9a9a20" stroke-width="1.0"/><line x1="27.37" y1="91.37" x2="34.83" y2="98.83" stroke="#9a9a20" stroke-width="1.0"/><line x1="31.10" y1="88.90" x2="31.10" y2="101.30" stroke="#9a9a20" stroke-width="1.0"/><line x1="34.83" y1="91.37" x2="27.37" y2="98.83" stroke="#9a9a20" stroke-width="1.0"/><line x1="24.30" y1="94.50" x2="36.70" y2="94.50" stroke="#fff000" stroke-width="1.15"/><line x1="26.77" y1="90.77" x2="34.23" y2="98.23" stroke="#fff000" stroke-width="1.15"/><line x1="30.50" y1="88.30" x2="30.50" y2="100.70" stroke="#fff000" stroke-width="1.15"/><line x1="34.23" y1="90.77" x2="26.77" y2="98.23" stroke="#fff000" stroke-width="1.15"/><line x1="24.90" y1="113.10" x2="37.30" y2="113.10" stroke="#9a9a20" stroke-width="1.0"/><line x1="27.37" y1="109.37" x2="34.83" y2="116.83" stroke="#9a9a20" stroke-width="1.0"/><line x1="31.10" y1="106.90" x2="31.10" y2="119.30" stroke="#9a9a20" stroke-width="1.0"/><line x1="34.83" y1="109.37" x2="27.37" y2="116.83" stroke="#9a9a20" stroke-width="1.0"/><line x1="24.30" y1="112.50" x2="36.70" y2="112.50" stroke="#fff000" stroke-width="1.15"/><line x1="26.77" y1="108.77" x2="34.23" y2="116.23" stroke="#fff000" stroke-width="1.15"/><line x1="30.50" y1="106.30" x2="30.50" y2="118.70" stroke="#fff000" stroke-width="1.15"/><line x1="34.23" y1="108.77" x2="26.77" y2="116.23" stroke="#fff000" stroke-width="1.15"/></svg>
  <div class="a" style="left:0;top:0;width:315px;height:109px;overflow:hidden">
  <div class="tb" style="left:99px;top:-2px"><span>de.comm.provider.tarife (NetNews)</span></div>
  <div class="tb" style="left:99px;top:16px"><span>de.comm.provider.t-online (NetNews)</span></div>
  <div class="tb" style="left:99px;top:34px;color:#fff"><span style="letter-spacing:0.016px">de.comm.provider.usenet (NetNews)</span></div>
  <div class="tb" style="left:99px;top:52px"><span>de.comm.provider.webspace (NetNews)</span></div>
  <div class="tb" style="left:99px;top:70px"><span>de.comm.software.40tude-dialog (NetNews)</span></div>
  <div class="tb" style="left:99px;top:88px"><span>de.comm.software.browser.internet-explorer (NetNews)</span></div>
  <div class="tb" style="left:99px;top:106px"><span>de.comm.software.browser.misc (NetNews)</span></div>
  </div>
  <div class="t red" style="right:18px;top:-2px"><span style="letter-spacing:-0.120px">829</span></div>
  <div class="t red" style="right:18px;top:16px"><span style="letter-spacing:-0.121px">1086</span></div>
  <div class="t" style="right:18px;top:34px;color:#ff0"><span style="letter-spacing:-0.121px">1437</span></div>
  <div class="a" style="left:346px;top:0;width:17px;height:109px;background:linear-gradient(to right,#f3f1ec,#fefefb)"></div>
  <div class="sbtn" style="left:346px;top:2px;width:15px;height:15px"></div>
  <svg class="a" style="left:349px;top:6px" width="9" height="7"><path d="M1,5.500 L4.500,2 L8,5.500" fill="none" stroke="#4d6185" stroke-width="2"/></svg>
 </div></div>
</div>
<!-- right panel -->
<div class="frame" style="left:377px;top:84px;width:366px;height:154px;border-bottom:1px solid #bcb9aa;border-left:1px solid #fff;border-right:1px solid #aca899"></div>
<div class="plus" style="left:382px;top:89px"></div>
<div class="dd" style="left:399px;top:94px"></div>
<div class="a" style="left:409px;top:88px;width:332px;height:14px;overflow:hidden;white-space:nowrap;line-height:13px"><span class="a" style="left:0;top:0"><span class="b" style="letter-spacing:0.033px">de.comm.provider.usenet</span></span><span class="a" style="left:147px;top:0"><span style="letter-spacing:0.337px">(0/0/0/0)</span></span><span class="a" style="left:195px;top:0"><span style="letter-spacing:-0.220px">(Zugangsunabhaengige News)</span></span></div>
<div class="lb" style="left:378px;top:103px;width:364px;height:133px">
 <div class="hdr" style="width:362px;height:18px;background:linear-gradient(to bottom,#ebeadb 0,#ebeadb 14px,#e2dece 15px,#d6d2c2 16px,#cbc7b8 17px)"></div>
 <div class="hs" style="left:58px"></div><div class="hs" style="left:95px"></div><div class="hs" style="left:127px"></div><div class="hs" style="left:222px"></div><div class="hs" style="left:342px"></div>
 <div class="t" style="left:7px;top:3px"><span style="letter-spacing:0.170px">Score/...</span></div>
 <div class="t" style="left:67px;top:3px"><span style="letter-spacing:0.448px">+/-</span></div>
 <div class="t" style="left:103px;top:3px"><span style="letter-spacing:-0.347px">Li...</span></div>
 <div class="t" style="left:135px;top:3px"><span style="letter-spacing:-0.137px">Subject (Name)</span></div>
 <div class="t" style="left:229px;top:3px"><span style="letter-spacing:0.188px">Date</span></div>
 <div class="a" style="left:345px;top:17px;width:17px;height:114px;background:linear-gradient(to right,#f3f1ec,#fefefb)"></div>
 <div class="sbtnd" style="left:345px;top:19px;width:15px;height:15px"></div>
 <div class="sbtnd" style="left:345px;top:114px;width:15px;height:15px"></div>
 <svg class="a" style="left:348px;top:23px" width="9" height="7"><path d="M1,5.500 L4.500,2 L8,5.500" fill="none" stroke="#c9c7ba" stroke-width="2"/></svg>
 <svg class="a" style="left:348px;top:118px" width="9" height="7"><path d="M1,1.500 L4.500,5 L8,1.500" fill="none" stroke="#c9c7ba" stroke-width="2"/></svg>
</div>
<!-- lower pane -->
<div class="a" style="left:5px;top:241px;width:738px;height:1px;background:#fff"></div>
<div class="plus" style="left:10px;top:246px"></div>
<div class="dd" style="left:27px;top:250px"></div>
<div class="lb" style="left:6px;top:261px;width:736px;height:114px"></div>


<!-- bottom dock -->
<div class="a" style="left:24px;top:398px;width:716px;height:29px;border:1px solid #919b9c;background:#fcfcfe"></div>
<div class="tab2" style="left:93px;width:81px"></div>
<div class="tab2" style="left:176px;width:78px"></div>
<div class="tab2" style="left:256px;width:39px"></div>
<div class="tabsel" style="left:25px;top:378px;width:68px;height:22px"></div>
<div class="t" style="left:33px;top:382px"><span style="letter-spacing:-0.273px">Me<u>l</u>dungen</span></div>
<div class="t" style="left:97px;top:384px"><span style="letter-spacing:0.023px"><u>A</u>ktive Threads</span></div>
<div class="t" style="left:181px;top:384px"><span style="letter-spacing:-0.226px">Geplante Jobs</span></div>
<div class="t" style="left:261px;top:384px"><span style="letter-spacing:-0.284px">F<u>e</u>hler</span></div>
<div class="lb" style="left:28px;top:402px;width:710px;height:24px">
 <div class="a" style="left:3px;top:3px;width:10px;height:10px;background:#e9256d"></div>
 <div class="t" style="left:14px;top:2px"><span style="letter-spacing:-0.156px">25120 neue Gruppen empfangen und 0 Gruppen von NetNews geloescht (29.03.2005 18:11)</span></div>
 <div class="a" style="left:690px;top:1px;width:17px;height:20px;background:#fefefb"></div>
 <div class="sbtn" style="left:691px;top:2px;width:15px;height:8px"></div>
 <div class="sbtn" style="left:691px;top:12px;width:15px;height:8px"></div>
 <svg class="a" style="left:696px;top:3px" width="6" height="5"><path d="M0.500,3.500 L3,1 L5.500,3.500" fill="none" stroke="#4d6185" stroke-width="1.300"/></svg>
 <svg class="a" style="left:696px;top:14px" width="6" height="5"><path d="M0.500,1 L3,3.500 L5.500,1" fill="none" stroke="#4d6185" stroke-width="1.300"/></svg>
</div>
<div class="a b" style="left:7px;top:380px;width:14px;height:26px"><div style="position:absolute;left:13px;top:2px;transform-origin:0 0;transform:rotate(90deg);white-space:nowrap;font-size:10px;line-height:12px;letter-spacing:-0.3px">St...</div></div>
<svg class="a" style="left:10px;top:417px" width="10" height="9"><path d="M1,0.500 L8.500,8 M8.500,0.500 L1,8" stroke="#000" stroke-width="1.600"/></svg>
<!-- status bar -->
<div class="a" style="left:4px;top:434px;width:740px;height:1px;background:#f8f7f0"></div>
<div class="t" style="left:8px;top:438px"><span style="letter-spacing:-0.156px">25120 neue Gruppen empfangen und 0 Gruppen von NetNews geloescht (29.03.2005)</span></div>
<div class="a" style="left:500px;top:434px;width:134px;height:19px;border:1px solid #b5b2a3;border-radius:3px;background:#fff"></div>
<div class="t" style="left:650px;top:438px"><span style="letter-spacing:-0.143px">Verbindungen: 0</span></div>
<svg class="a" style="left:731px;top:441px" width="12" height="12"><path d="M11.500,1 L1,11.500 M11.500,5 L5,11.500 M11.500,9 L9,11.500" stroke="#aeaa9a" stroke-width="2"/><path d="M11.500,2.200 L2.200,11.500 M11.500,6.200 L6.200,11.500 M11.500,10.200 L10.200,11.500" stroke="#fff" stroke-width="0.800"/></svg>
</div>
<!-- context menu -->
<div id="cm">
 <div class="gut"></div>
 <div class="a" style="left:1px;top:56px;width:293px;height:26px;background:#c1d2ee;border:1px solid #316ac5"></div>
 <div class="mi" style="top:7px"><span style="letter-spacing:-0.075px">Standardoptionen für Gruppen</span></div>
 <div class="mi" style="top:33px"><span style="letter-spacing:-0.068px">Optionen für ausgewählte Gruppe</span></div>
 <div class="sc" style="top:33px"><span style="letter-spacing:0.104px">Alt+Enter</span></div>
 <div class="mi" style="top:62px"><span style="letter-spacing:-0.025px">Abonnieren (aufheben)</span></div>
 <div class="sc" style="top:62px"><span style="letter-spacing:-0.062px">Ctrl+S</span></div>
 <div class="mi" style="top:88px"><span style="letter-spacing:-0.177px">Kategorie</span></div>
 <div class="sub" style="top:91px"></div>
 <div class="mi" style="top:117px"><span style="letter-spacing:0.078px">Neuer Ordner...</span></div>
 <div class="mi dis" style="top:143px"><span style="letter-spacing:-0.034px">Ordner umbenennen...</span></div>
 <div class="mi dis" style="top:169px"><span style="letter-spacing:-0.047px">Ordner/Trennlinie löschen...</span></div>
 <div class="mi" style="top:198px"><span style="letter-spacing:-0.179px">Gruppe leeren</span></div>
 <div class="mi" style="top:227px"><span style="letter-spacing:-0.202px">Markierte Gruppen als gelesen markieren</span></div>
 <div class="mi" style="top:253px"><span style="letter-spacing:-0.232px">Alle Gruppen als gelesen markieren</span></div>
 <div class="mi" style="top:282px"><span style="letter-spacing:-0.198px">Markierte Gruppen als ungelesen markieren</span></div>
 <div class="mi" style="top:311px"><span style="letter-spacing:-0.256px">Kopieren</span></div>
 <div class="sc" style="top:311px"><span>Ctrl+C</span></div>
 <div class="mi" style="top:340px"><span style="letter-spacing:-0.145px">Neu anordnen</span></div>
 <div class="sub" style="top:343px"></div>
 <div class="ms" style="top:54px"></div>
 <div class="ms" style="top:109px"></div>
 <div class="ms" style="top:190px"></div>
 <div class="ms" style="top:219px"></div>
 <div class="ms" style="top:274px"></div>
 <div class="ms" style="top:303px"></div>
 <div class="ms" style="top:332px"></div>
<svg class="a" style="left:-322px;top:-164px" width="748" height="529" viewBox="0 0 748 529"><g opacity="1"><rect x="327.5" y="171.5" width="15" height="14" fill="#fff" stroke="#000"/><path d="M343,172 v15 M328,186 h16" stroke="#000" stroke-width="1" opacity="0.5" fill="none"/><path d="M329,175 l1,-1.5 l1,1.5 l1,-1.5 l1,1.5 l1,-1.5 l1,1.5 l1,-1.5 l1,1.5 l1,-1.5 l1,1.5 l1,-1.5 l1,1.5" fill="none" stroke="none" stroke-width="1.3" stroke-linejoin="round"/><line x1="329" y1="176.5" x2="341" y2="176.5" stroke="#4a4a4a" stroke-width="1" stroke-dasharray="2 1" opacity="0.85"/><line x1="334" y1="178.5" x2="341" y2="178.5" stroke="#4a4a4a" stroke-width="1" stroke-dasharray="2 1" opacity="0.85"/><line x1="334" y1="180.5" x2="341" y2="180.5" stroke="#4a4a4a" stroke-width="1" stroke-dasharray="2 1" opacity="0.85"/><line x1="334" y1="182.5" x2="341" y2="182.5" stroke="#4a4a4a" stroke-width="1" stroke-dasharray="2 1" opacity="0.85"/><rect x="329" y="178" width="4" height="1.5" fill="#2a9aa8"/><rect x="329" y="179.3" width="4" height="3.7" fill="#0f8a1f"/></g><path d="M329.5,174.5 L334.0,170.0 L337.0,167.8 L343.5,167.8 L343.5,172.5 L338.0,173.5 L335.5,175.0 L333.0,173.5 L331.0,175.5 z" fill="#f7b954" stroke="#c9862a" stroke-width="0.600"/><path d="M329.2,174.8 L331.0,175.6 L333.0,173.6 L335.5,175.2 L338.0,173.6 L343.5,172.8" fill="none" stroke="#000" stroke-width="1" stroke-dasharray="1 1"/><path d="M335.0,171.0 l2,2 m0,-2 l-2,2 m3,-3 l2,2" stroke="#9a6a20" stroke-width="0.600" fill="none"/><rect x="343.5" y="167.8" width="1.800" height="4.500" fill="#3a88e8"/><g opacity="1"><rect x="327.5" y="197.5" width="15" height="14" fill="#fff" stroke="#000"/><path d="M343,198 v15 M328,212 h16" stroke="#000" stroke-width="1" opacity="0.5" fill="none"/><path d="M327.5,211.5 v-14 h15" fill="none" stroke="#0a7ce0" stroke-width="1.2"/><path d="M329,201 l1,-1.5 l1,1.5 l1,-1.5 l1,1.5 l1,-1.5 l1,1.5 l1,-1.5 l1,1.5 l1,-1.5 l1,1.5 l1,-1.5 l1,1.5" fill="none" stroke="none" stroke-width="1.3" stroke-linejoin="round"/><line x1="329" y1="202.5" x2="341" y2="202.5" stroke="#3aa0ff" stroke-width="1" stroke-dasharray="2 1" opacity="0.85"/><line x1="334" y1="204.5" x2="341" y2="204.5" stroke="#3aa0ff" stroke-width="1" stroke-dasharray="2 1" opacity="0.85"/><line x1="334" y1="206.5" x2="341" y2="206.5" stroke="#3aa0ff" stroke-width="1" stroke-dasharray="2 1" opacity="0.85"/><line x1="334" y1="208.5" x2="341" y2="208.5" stroke="#3aa0ff" stroke-width="1" stroke-dasharray="2 1" opacity="0.85"/><rect x="329" y="204" width="4" height="1.5" fill="#2a9aa8"/><rect x="329" y="205.3" width="4" height="3.7" fill="#0f8a1f"/></g><path d="M329.5,200.5 L334.0,196.0 L337.0,193.8 L343.5,193.8 L343.5,198.5 L338.0,199.5 L335.5,201.0 L333.0,199.5 L331.0,201.5 z" fill="#f7b954" stroke="#c9862a" stroke-width="0.600"/><path d="M329.2,200.8 L331.0,201.6 L333.0,199.6 L335.5,201.2 L338.0,199.6 L343.5,198.8" fill="none" stroke="#000" stroke-width="1" stroke-dasharray="1 1"/><path d="M335.0,197.0 l2,2 m0,-2 l-2,2 m3,-3 l2,2" stroke="#9a6a20" stroke-width="0.600" fill="none"/><rect x="343.5" y="193.8" width="1.800" height="4.500" fill="#3a88e8"/><g opacity="1"><rect x="328.5" y="224.5" width="16" height="16" fill="#fff" stroke="#000"/><path d="M345,225 v17 M329,241 h17" stroke="#000" stroke-width="1" opacity="0.5" fill="none"/><path d="M330,228 l1,-1.5 l1,1.5 l1,-1.5 l1,1.5 l1,-1.5 l1,1.5 l1,-1.5 l1,1.5 l1,-1.5 l1,1.5 l1,-1.5 l1,1.5" fill="none" stroke="#000" stroke-width="1.3" stroke-linejoin="round"/><line x1="330" y1="229.5" x2="343" y2="229.5" stroke="#4a4a4a" stroke-width="1" stroke-dasharray="2 1" opacity="0.85"/><line x1="335" y1="231.5" x2="343" y2="231.5" stroke="#4a4a4a" stroke-width="1" stroke-dasharray="2 1" opacity="0.85"/><line x1="335" y1="233.5" x2="343" y2="233.5" stroke="#4a4a4a" stroke-width="1" stroke-dasharray="2 1" opacity="0.85"/><line x1="335" y1="235.5" x2="343" y2="235.5" stroke="#4a4a4a" stroke-width="1" stroke-dasharray="2 1" opacity="0.85"/><line x1="330" y1="237.5" x2="343" y2="237.5" stroke="#4a4a4a" stroke-width="1" stroke-dasharray="2 1" opacity="0.85"/><rect x="330" y="231" width="4" height="1.5" fill="#2a9aa8"/><rect x="330" y="232.3" width="4" height="3.7" fill="#0f8a1f"/></g><path d="M327.500,293.500 v-10 h5 l1.500,1.500 h6.500 v2.500" fill="#e8900c" stroke="#8a4a00" stroke-width="0.900"/><path d="M327.500,293.500 l3.500,-6.500 h14 l-3.500,6.500 z" fill="#ffb83c" stroke="#8a4a00" stroke-width="0.900" stroke-linejoin="round"/><line x1="339.10" y1="281.50" x2="345.90" y2="281.50" stroke="#8a8a10" stroke-width="2.0" stroke-linecap="round"/><line x1="340.10" y1="279.10" x2="344.90" y2="283.90" stroke="#8a8a10" stroke-width="2.0" stroke-linecap="round"/><line x1="342.50" y1="278.10" x2="342.50" y2="284.90" stroke="#8a8a10" stroke-width="2.0" stroke-linecap="round"/><line x1="344.90" y1="279.10" x2="340.10" y2="283.90" stroke="#8a8a10" stroke-width="2.0" stroke-linecap="round"/><line x1="339.10" y1="281.50" x2="345.90" y2="281.50" stroke="#ffee00" stroke-width="1.2" stroke-linecap="round"/><line x1="340.10" y1="279.10" x2="344.90" y2="283.90" stroke="#ffee00" stroke-width="1.2" stroke-linecap="round"/><line x1="342.50" y1="278.10" x2="342.50" y2="284.90" stroke="#ffee00" stroke-width="1.2" stroke-linecap="round"/><line x1="344.90" y1="279.10" x2="340.10" y2="283.90" stroke="#ffee00" stroke-width="1.2" stroke-linecap="round"/><path d="M329.500,318.500 v-11 h4.500 l1.500,1.500 h7 v9.500 z" fill="#c6c3b6" stroke="#aeab9e"/><rect x="329.500" y="320" width="13" height="2.500" fill="#eae8de" stroke="#aeab9e"/><rect x="331.500" y="335.500" width="12" height="10" fill="#c6c3b6" stroke="#aeab9e"/><path d="M328,333 l15,14 M343,333 l-14,14" stroke="#a8a598" stroke-width="1.600"/><path d="M328,349 l4,-4" stroke="#a8a598" stroke-width="2.500"/><g opacity="1"><rect x="328.5" y="361.5" width="16" height="15" fill="#fff" stroke="#000"/><path d="M345,362 v16 M329,377 h17" stroke="#000" stroke-width="1" opacity="0.5" fill="none"/><path d="M330,365 l1,-1.5 l1,1.5 l1,-1.5 l1,1.5 l1,-1.5 l1,1.5 l1,-1.5 l1,1.5 l1,-1.5 l1,1.5 l1,-1.5 l1,1.5" fill="none" stroke="#000" stroke-width="1.3" stroke-linejoin="round"/><line x1="330" y1="366.5" x2="343" y2="366.5" stroke="#4a4a4a" stroke-width="1" stroke-dasharray="2 1" opacity="0.85"/><line x1="335" y1="368.5" x2="343" y2="368.5" stroke="#4a4a4a" stroke-width="1" stroke-dasharray="2 1" opacity="0.85"/><line x1="335" y1="370.5" x2="343" y2="370.5" stroke="#4a4a4a" stroke-width="1" stroke-dasharray="2 1" opacity="0.85"/><line x1="335" y1="372.5" x2="343" y2="372.5" stroke="#4a4a4a" stroke-width="1" stroke-dasharray="2 1" opacity="0.85"/><line x1="330" y1="374.5" x2="343" y2="374.5" stroke="#4a4a4a" stroke-width="1" stroke-dasharray="2 1" opacity="0.85"/><rect x="330" y="368" width="4" height="1.5" fill="#2a9aa8"/><rect x="330" y="369.3" width="4" height="3.7" fill="#0f8a1f"/></g><path d="M327.500,360.500 l17,16.500 M344.500,360.500 l-16,16.500" stroke="#f01010" stroke-width="1.800"/><g opacity="1"><rect x="327.5" y="391.5" width="13" height="12" fill="#fff" stroke="#000"/><path d="M341,392 v13 M328,404 h14" stroke="#000" stroke-width="1" opacity="0.5" fill="none"/><path d="M329,395 l1,-1.5 l1,1.5 l1,-1.5 l1,1.5 l1,-1.5 l1,1.5 l1,-1.5 l1,1.5 l1,-1.5 l1,1.5" fill="none" stroke="#000" stroke-width="1.3" stroke-linejoin="round"/><line x1="329" y1="396.5" x2="339" y2="396.5" stroke="#4a4a4a" stroke-width="1" stroke-dasharray="2 1" opacity="0.85"/><line x1="334" y1="398.5" x2="339" y2="398.5" stroke="#4a4a4a" stroke-width="1" stroke-dasharray="2 1" opacity="0.85"/><line x1="334" y1="400.5" x2="339" y2="400.5" stroke="#4a4a4a" stroke-width="1" stroke-dasharray="2 1" opacity="0.85"/><rect x="329" y="398" width="4" height="1.5" fill="#2a9aa8"/><rect x="329" y="399.3" width="4" height="2.2" fill="#0f8a1f"/></g><line x1="345.0" y1="390.5" x2="340.4" y2="394.3" stroke="#8c8c8c" stroke-width="3.600" stroke-linecap="round"/><line x1="345.0" y1="390.5" x2="340.4" y2="394.3" stroke="#e4e4e4" stroke-width="2.400" stroke-linecap="round"/><line x1="340.4" y1="394.3" x2="336.4" y2="397.7" stroke="#f5a820" stroke-width="3.200"/><path d="M335.2,396.3 L333.0,400.5 L337.6,399.1 z" fill="#000"/><rect x="326.500" y="415.500" width="13" height="11" fill="#fff" stroke="#000"/><rect x="328.500" y="417.500" width="13" height="11" fill="#fff" stroke="#000"/><g opacity="1"><rect x="330.5" y="419.5" width="11" height="12" fill="#fff" stroke="#000"/><path d="M342,420 v13 M331,432 h12" stroke="#000" stroke-width="1" opacity="0.5" fill="none"/><path d="M332,423 l1,-1.5 l1,1.5 l1,-1.5 l1,1.5 l1,-1.5 l1,1.5 l1,-1.5 l1,1.5" fill="none" stroke="#000" stroke-width="1.3" stroke-linejoin="round"/><line x1="332" y1="424.5" x2="340" y2="424.5" stroke="#4a4a4a" stroke-width="1" stroke-dasharray="2 1" opacity="0.85"/><line x1="337" y1="426.5" x2="340" y2="426.5" stroke="#4a4a4a" stroke-width="1" stroke-dasharray="2 1" opacity="0.85"/><line x1="337" y1="428.5" x2="340" y2="428.5" stroke="#4a4a4a" stroke-width="1" stroke-dasharray="2 1" opacity="0.85"/><rect x="332" y="426" width="4" height="1.5" fill="#2a9aa8"/><rect x="332" y="427.3" width="4" height="2.2" fill="#0f8a1f"/></g><line x1="345.0" y1="416.5" x2="340.6" y2="420.3" stroke="#8c8c8c" stroke-width="3.600" stroke-linecap="round"/><line x1="345.0" y1="416.5" x2="340.6" y2="420.3" stroke="#e4e4e4" stroke-width="2.400" stroke-linecap="round"/><line x1="340.6" y1="420.3" x2="336.7" y2="423.7" stroke="#f5a820" stroke-width="3.200"/><path d="M335.5,422.3 L333.5,426.5 L337.9,425.1 z" fill="#000"/><g opacity="1"><rect x="327.5" y="446.5" width="14" height="12" fill="#fff" stroke="#e01010"/><path d="M342,447 v13 M328,459 h15" stroke="#e01010" stroke-width="1" opacity="0.5" fill="none"/><path d="M329,450 l1,-1.5 l1,1.5 l1,-1.5 l1,1.5 l1,-1.5 l1,1.5 l1,-1.5 l1,1.5 l1,-1.5 l1,1.5" fill="none" stroke="#c00000" stroke-width="1.3" stroke-linejoin="round"/><line x1="329" y1="451.5" x2="340" y2="451.5" stroke="#e04040" stroke-width="1" stroke-dasharray="2 1" opacity="0.85"/><line x1="334" y1="453.5" x2="340" y2="453.5" stroke="#e04040" stroke-width="1" stroke-dasharray="2 1" opacity="0.85"/><line x1="334" y1="455.5" x2="340" y2="455.5" stroke="#e04040" stroke-width="1" stroke-dasharray="2 1" opacity="0.85"/><rect x="329" y="453" width="4" height="1.5" fill="#2a9aa8"/><rect x="329" y="454.3" width="4" height="2.2" fill="#0f8a1f"/></g><line x1="345.0" y1="444.0" x2="340.4" y2="447.8" stroke="#8c8c8c" stroke-width="3.600" stroke-linecap="round"/><line x1="345.0" y1="444.0" x2="340.4" y2="447.8" stroke="#e4e4e4" stroke-width="2.400" stroke-linecap="round"/><line x1="340.4" y1="447.8" x2="336.4" y2="451.2" stroke="#f5a820" stroke-width="3.200"/><path d="M335.2,449.8 L333.0,454.0 L337.6,452.6 z" fill="#000"/><path d="M328.5,473.5 h6 l3,3 v8 h-9 z" fill="#fff" stroke="#000"/><path d="M334.5,473.5 v3 h3" fill="none" stroke="#000" stroke-width="0.800"/><line x1="330" y1="478.5" x2="336" y2="478.5" stroke="#333" stroke-dasharray="2 1"/><line x1="330" y1="480.5" x2="336" y2="480.5" stroke="#333" stroke-dasharray="2 1"/><line x1="330" y1="482.5" x2="336" y2="482.5" stroke="#333" stroke-dasharray="2 1"/><path d="M333.5,478.5 h6 l3,3 v8 h-9 z" fill="#fff" stroke="#000"/><path d="M339.5,478.5 v3 h3" fill="none" stroke="#000" stroke-width="0.800"/><line x1="335" y1="483.5" x2="341" y2="483.5" stroke="#333" stroke-dasharray="2 1"/><line x1="335" y1="485.5" x2="341" y2="485.5" stroke="#333" stroke-dasharray="2 1"/><line x1="335" y1="487.5" x2="341" y2="487.5" stroke="#333" stroke-dasharray="2 1"/></svg>
</div>
<svg class="a" style="left:518px;top:230px" width="14" height="22" viewBox="0 0 14 22"><path d="M1,1 L1,17 L4.800,13.500 L7.500,20 L10,19 L7.300,12.600 L12.300,12.600 Z" fill="#fff" stroke="#000" stroke-width="1.2" stroke-linejoin="miter"/></svg>
</body></html>
